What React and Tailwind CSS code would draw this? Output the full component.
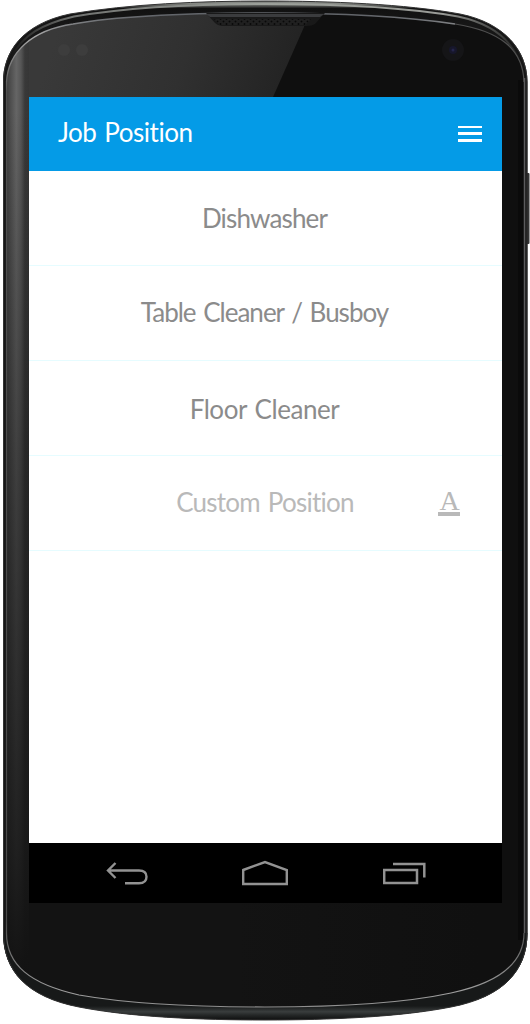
function PhoneBody() {
  return (
    <svg className="absolute inset-0" width="530" height="1024" viewBox="0 0 530 1024" fill="none" aria-hidden="true">
      <defs>
        <linearGradient id="rim" x1="0" y1="0" x2="0" y2="24" gradientUnits="userSpaceOnUse">
          <stop offset="0" stopColor="#353535" />
          <stop offset="0.12" stopColor="#929590" />
          <stop offset="0.22" stopColor="#60625f" />
          <stop offset="0.35" stopColor="#111" />
          <stop offset="1" stopColor="#161616" />
        </linearGradient>
        <linearGradient id="rimBottom" x1="0" y1="1006" x2="0" y2="1021" gradientUnits="userSpaceOnUse">
          <stop offset="0" stopColor="#171919" />
          <stop offset="0.38" stopColor="#393d3d" />
          <stop offset="0.6" stopColor="#252828" />
          <stop offset="1" stopColor="#090909" />
        </linearGradient>
        <linearGradient id="glass" x1="60" y1="20" x2="310" y2="100" gradientUnits="userSpaceOnUse">
          <stop offset="0" stopColor="#393939" />
          <stop offset="0.5" stopColor="#303030" />
          <stop offset="1" stopColor="#202020" />
        </linearGradient>
        <linearGradient id="leftEdge" x1="6" y1="0" x2="29" y2="0" gradientUnits="userSpaceOnUse">
          <stop offset="0" stopColor="#3c3c3c" />
          <stop offset="0.45" stopColor="#656565" />
          <stop offset="0.65" stopColor="#565656" />
          <stop offset="0.82" stopColor="#393939" />
          <stop offset="1" stopColor="#363636" />
        </linearGradient>
        <linearGradient id="edgeFade" x1="0" y1="110" x2="0" y2="980" gradientUnits="userSpaceOnUse">
          <stop offset="0" stopColor="#121212" stopOpacity="0" />
          <stop offset="0.4" stopColor="#121212" stopOpacity="0.45" />
          <stop offset="0.85" stopColor="#121212" stopOpacity="0.83" />
          <stop offset="1" stopColor="#121212" />
        </linearGradient>
        <linearGradient id="line" x1="0" y1="0" x2="0" y2="1024" gradientUnits="userSpaceOnUse">
          <stop offset="0" stopColor="#62656a" />
          <stop offset="0.015" stopColor="#62656a" />
          <stop offset="0.035" stopColor="#a8a8a8" />
          <stop offset="0.09" stopColor="#505050" />
          <stop offset="0.9" stopColor="#4b4b4b" />
          <stop offset="0.97" stopColor="#a0a0a0" />
          <stop offset="1" stopColor="#777" />
        </linearGradient>
        <linearGradient id="rightShade" x1="230" y1="0" x2="480" y2="0" gradientUnits="userSpaceOnUse">
          <stop offset="0" stopColor="#0e0e0e" stopOpacity="0" />
          <stop offset="1" stopColor="#0e0e0e" stopOpacity="0.6" />
        </linearGradient>
        <linearGradient id="shine" x1="12" y1="0" x2="518" y2="0" gradientUnits="userSpaceOnUse">
          <stop offset="0" stopColor="#858783" stopOpacity="0" />
          <stop offset="0.12" stopColor="#707270" />
          <stop offset="0.5" stopColor="#9ca09a" />
          <stop offset="0.85" stopColor="#999b97" />
          <stop offset="1" stopColor="#858783" stopOpacity="0.15" />
        </linearGradient>
        <pattern id="mesh" width="6" height="5" patternUnits="userSpaceOnUse">
          <rect width="6" height="5" fill="#202020" />
          <circle cx="1.5" cy="1.5" r="1" fill="#090909" />
          <circle cx="4.5" cy="4" r="1" fill="#090909" />
        </pattern>
        <clipPath id="faceClip">
          <path d="M6.5 82C8 52 32 30 73 24C130 14 205 13 265 13C330 13 402 16 455 24C500 31 523 49 524 82V933C524 963 498 983 451 993C400 1004 330 1007 265 1007C200 1007 130 1004 79 995C30 984 6.5 965 6.5 933Z" />
        </clipPath>
      </defs>
      <rect x="526" y="173" width="3.5" height="71" rx="1" fill="#333" />
      <path d="M3 82C3 52 22 24 70 14C130 4 200 1 265 1C330 1 405 4 460 14C505 23 527.5 51 527.5 82V933C527.5 971 503 997 451 1007C400 1017 330 1020 265 1020C200 1020 130 1017 79 1007C27 997 3 971 3 933Z" fill="url(#rim)" />
      <path d="M3 933C3 971 27 997 79 1007C130 1017 200 1020 265 1020C330 1020 400 1017 451 1007C503 997 527.5 971 527.5 933Z" fill="url(#rimBottom)" />
      <path d="M3.5 82C3.5 52 22 24 70 14C130 4 200 1 265 1C330 1 405 4 460 14C505 23 527 51 527 82V933C527 971 503 997 451 1007C400 1017 330 1020 265 1020C200 1020 130 1017 79 1007C27 997 3.5 971 3.5 933Z" stroke="#333" />
      <path d="M12 56C23 35 42 24 74 16.500C130 7 200 4 265 4C330 4 405 7 458 16.500C489 23 509 38 518 58" stroke="url(#shine)" strokeWidth="2" />
      <g clipPath="url(#faceClip)">
        <rect width="530" height="1024" fill="#0f0f0f" />
        <path d="M22 0H308L304 27L273 97H22Z" fill="url(#glass)" />
        <rect x="22" y="900" width="508" height="124" fill="#131313" />
        <rect x="200" y="900" width="330" height="124" fill="url(#rightShade)" />
        <rect x="5" y="0" width="24" height="1024" fill="url(#leftEdge)" />
        <rect x="5" y="0" width="24" height="1024" fill="url(#edgeFade)" />
        <rect x="518" y="80" width="6" height="860" fill="#0a0a0a" />
      </g>
      <path d="M6.500 82C8 52 32 30 73 24C130 14 205 13 265 13C330 13 402 16 455 24" stroke="url(#line)" strokeWidth="1.3" />
      <path d="M455 24C500 31 523 49 524 82" stroke="#505050" strokeWidth="1.2" />
      <path d="M524.5 78V933" stroke="#5b5b5d" strokeWidth="1.5" />
      <path d="M524 933C524 963 498 983 451 993C400 1004 330 1007 265 1007C200 1007 130 1004 79 995C30 984 6.5 965 6.5 933V82" stroke="url(#line)" strokeWidth="1.2" />
      <path d="M206 13H325L315 24Q312 26 307 26H222Q218 26 215 23Z" fill="#191919" />
      <path d="M206 14H324L320 17H210Z" fill="#3b3c3e" />
      <path d="M214 19H311L305 25H220Z" fill="url(#mesh)" />
      <circle cx="64" cy="50" r="6" fill="#3d3d3d" />
      <circle cx="82" cy="50" r="6" fill="#3d3d3d" />
      <circle cx="453" cy="50" r="11" fill="#151517" />
      <circle cx="453" cy="50" r="4" fill="#17172b" />
      <circle cx="453" cy="50" r="1.5" fill="#25254b" />
    </svg>
  );
}

function NavBar() {
  return (
    <nav className="flex h-[60px] shrink-0 items-center bg-black pl-[77px]">
      <button aria-label="Back">
        <svg width="43" height="24" viewBox="0 0 43 24" fill="none" stroke="#929292" strokeWidth="2.4">
          <path d="M9.500 2L2 9.500L9.500 17M2 9.500H33Q40.500 9.500 40.500 15.800Q40.500 22.200 33 22.200H19" />
        </svg>
      </button>
      <button aria-label="Home" className="ml-[93px]">
        <svg width="46" height="26" viewBox="0 0 46 26" fill="none" stroke="#929292" strokeWidth="2.4">
          <path d="M1.2 10L23 2L44.8 10V24H1.2Z" />
        </svg>
      </button>
      <button aria-label="Recent apps" className="ml-[95px]">
        <svg width="43" height="24" viewBox="0 0 43 24" fill="none" stroke="#929292" strokeWidth="2.5">
          <path d="M1.2 9H34V22H1.2ZM10 3H41.3V16.500" />
        </svg>
      </button>
    </nav>
  );
}

export default function App() {
  return (
    <div className="relative h-[1024px] w-[530px] overflow-hidden bg-white font-['Lato',sans-serif]">
      <PhoneBody />
      <main className="relative mt-[97px] ml-[29px] flex h-[806px] w-[473px] flex-col bg-white">
        <header className="flex h-[73.5px] shrink-0 items-center justify-between bg-[#049be7] pr-5 pl-[29px]">
          <h1 className="pb-1 text-[26px] leading-8 tracking-[-0.45px] text-white [word-spacing:1.5px]">Job Position</h1>
          <button aria-label="Menu" className="flex w-6 flex-col gap-1">
            <span className="h-[2.7px] bg-white" />
            <span className="h-[2.7px] bg-white" />
            <span className="h-[2.7px] bg-white" />
          </button>
        </header>
        <ul className="text-center text-[26px] leading-8 text-[#8b8b8b]">
          <li className="flex h-[95px] items-center justify-center border-b border-[#e6fcff] pr-0.5 tracking-[-0.85px]">
            Dishwasher
          </li>
          <li className="flex h-[95px] items-center justify-center border-b border-[#e6fcff] pr-0.5 pb-0.5 tracking-[-1px] [word-spacing:2px]">
            Table Cleaner / Busboy
          </li>
          <li className="flex h-[95px] items-center justify-center border-b border-[#e6fcff] pt-0.5 pr-0.5 tracking-[-0.45px] [word-spacing:2px]">
            Floor Cleaner
          </li>
          <li className="grid h-[95px] grid-cols-[1fr_auto_1fr] items-center border-b border-[#e6fcff] text-[#b9b9b9]">
            <span className="col-start-2 pr-px pb-0.5 tracking-[-0.75px] [word-spacing:2px]">Custom Position</span>
            <span className="mr-[42px] flex w-[22px] flex-col items-center justify-self-end">
              <span className="font-['Liberation_Serif',serif] text-[28px] leading-[21px] tracking-[-1px]">A</span>
              <span className="mt-px h-1 w-full bg-[#b9b9b9]" />
            </span>
          </li>
        </ul>
        <div className="flex-1" />
        <NavBar />
      </main>
    </div>
  );
}
